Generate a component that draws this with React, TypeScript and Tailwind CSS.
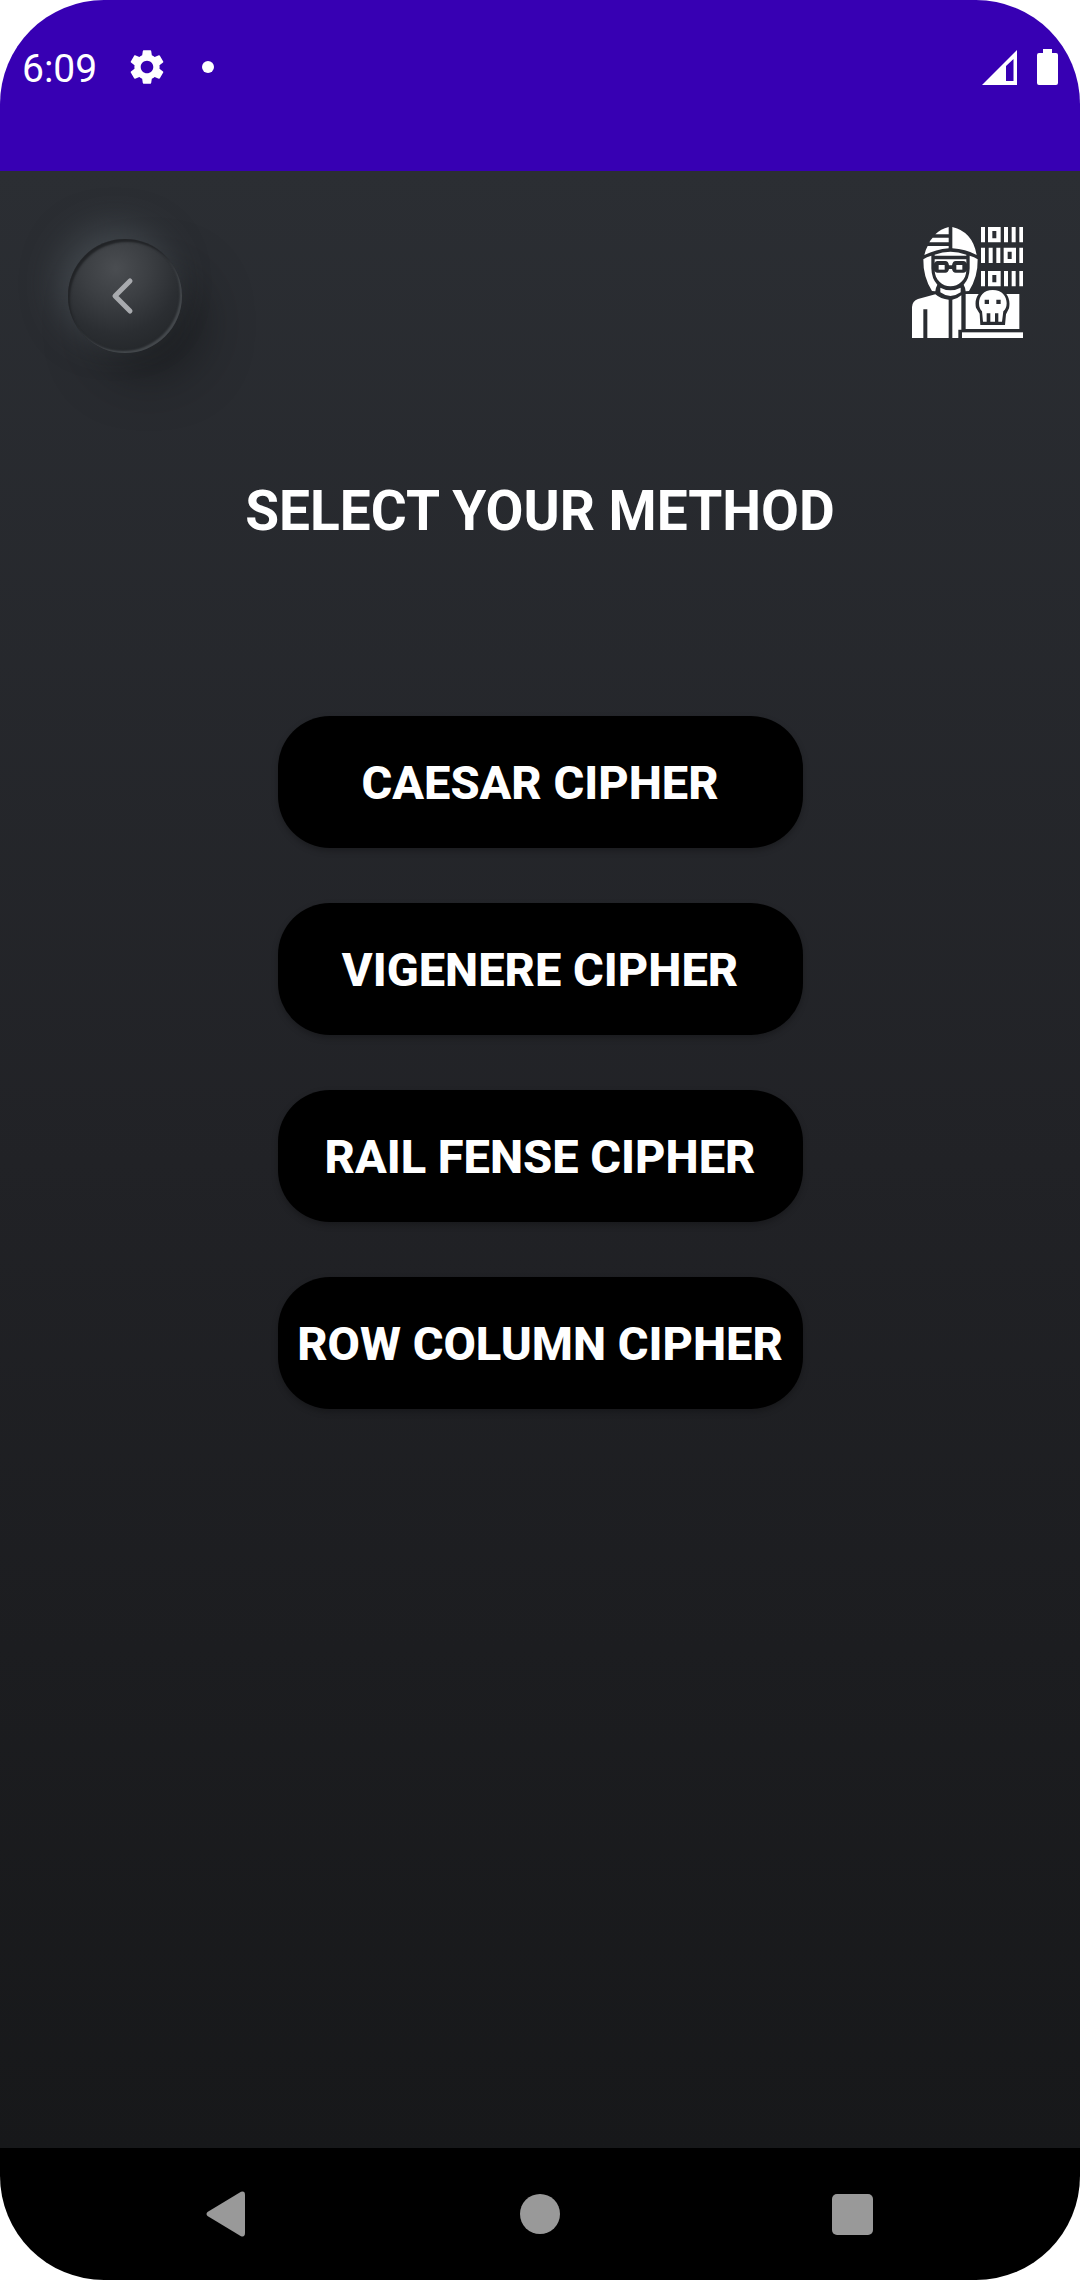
import React from "react";
import { MdSettings } from "react-icons/md";

const METHODS = [
  "CAESAR CIPHER",
  "VIGENERE CIPHER",
  "RAIL FENSE CIPHER",
  "ROW COLUMN CIPHER",
];

function StatusBar() {
  return (
    <div className="flex h-[171px] items-start justify-between bg-[#3700b3] pt-[46px] pr-[22px] pl-[22px] text-white">
      <div className="flex h-[42px] items-center">
        <span className="pt-1 text-[39px] leading-[42px]">6:09</span>
        <MdSettings className="ml-[29px] size-[42px]" aria-label="Settings" />
        <span className="ml-[34px] size-3 rounded-full bg-white" />
      </div>
      <div className="flex h-[42px] items-center gap-5">
        <svg viewBox="0 0 35 35" className="size-[35px]" aria-label="Signal">
          <path
            fill="currentColor"
            fillRule="evenodd"
            d="M0 35 35 0V35ZM24 16V31H31.500V9Z"
          />
        </svg>
        <svg viewBox="0 0 21 36" className="h-9 w-[21px]" aria-label="Battery">
          <path
            fill="currentColor"
            d="M6 0H15V4H19Q21 4 21 6V34Q21 36 19 36H2Q0 36 0 34V6Q0 4 2 4H6Z"
          />
        </svg>
      </div>
    </div>
  );
}

function BackButton() {
  return (
    <button
      type="button"
      aria-label="Back"
      className="mt-3 flex size-[114px] items-center justify-center rounded-full bg-[radial-gradient(circle_at_42%_26%,#4a4d51_0%,#3c3f43_30%,#2b2e32_60%,#232629_85%)] shadow-[-10px_-12px_34px_rgba(88,95,102,0.5),24px_28px_44px_rgba(20,22,24,0.5),inset_2px_3px_2px_#222427,inset_-2px_-2px_2px_#45494d]"
    >
      <svg viewBox="0 0 114 114" className="size-[114px]" fill="none">
        <path
          d="M62 42 47 57 62 72"
          stroke="#a8aaae"
          strokeWidth="5"
          strokeLinecap="round"
          strokeLinejoin="round"
        />
      </svg>
    </button>
  );
}

function HackerLogo() {
  return (
    <svg
      viewBox="36 36 333 333"
      className="size-[111px] text-white"
      role="img"
      aria-label="Hacker"
    >
      <g fill="currentColor">
        {/* cap */}
        <path d="M146 36V58H106Q122 42 146 36Z" />
        <path d="M98 68H146V82H88Q92 74 98 68Z" />
        <path d="M83 93H146V100Q108 103 73 120Q76 105 83 93Z" />
        <path d="M157 36Q218 50 230 120Q196 102 157 100Z" />
        {/* hood sides */}
        <path d="M70 133Q80 126 94 122V160Q95 192 112 209Q106 220 106 229L96 228Q69 186 70 133Z" />
        <path d="M233 133Q223 126 209 122V160Q208 192 191 209Q197 220 197 229L207 228Q234 186 233 133Z" />
        {/* face */}
        <path d="M104 119Q151 102 199 119V122H104Z" />
        <path
          fillRule="evenodd"
          d="M104 133H199V165C199 194 176 214 151 214C127 214 104 194 104 165ZM112 138Q104 138 104 147V164Q104 173 112 173H136Q145 173 147 162H156Q158 173 167 173H190Q199 173 199 164V147Q199 138 190 138H167Q158 138 156 151H147Q145 138 136 138Z"
        />
        <rect x="116" y="150" width="18" height="14" />
        <rect x="169" y="150" width="18" height="14" />
        {/* neck and torso */}
        <path d="M121 218Q151 234 182 218V232Q151 254 121 232Z" />
        <path d="M36 369V276Q37 258 54 252L106 238Q122 252 146 254V369H82V283H70V369Z" />
        <path d="M157 254Q172 252 184 241V344H175V369H157Z" />
        {/* laptop */}
        <path d="M197 237H236Q223 254 228 278L239 296L241 330H315L318 298L327 280Q332 254 319 237H358V342H197Z" />
        <rect x="186" y="352" width="183" height="17" />
        {/* skull */}
        <path
          fillRule="evenodd"
          d="M278 225C306 225 320 244 320 265Q320 280 310 289L306 320H295V295H285V320H271V295H260V320H249L246 289Q237 280 237 265C237 244 251 225 278 225ZM254 254V267H267V254ZM289 254V267H302V254Z"
        />
        {/* binary digits, row 1 */}
        <path
          fillRule="evenodd"
          d="M243 36H255V82H243ZM264 36H302V82H264ZM277 48V70H289V48ZM312 36H324V82H312ZM335 36H347V82H335ZM358 36H369V82H358Z"
        />
        {/* row 2 */}
        <path
          fillRule="evenodd"
          d="M243 98H255V144H243ZM266 98H278V144H266ZM289 98H301V144H289ZM311 98H348V144H311ZM323 110V132H335V110ZM358 98H369V144H358Z"
        />
        {/* row 3 */}
        <path
          fillRule="evenodd"
          d="M243 168H255V214H243ZM264 168H302V214H264ZM277 180V202H289V180ZM312 168H324V214H312ZM335 168H347V214H335ZM358 168H369V214H358Z"
        />
      </g>
    </svg>
  );
}

function NavigationBar() {
  return (
    <nav className="grid h-[132px] grid-cols-3 items-center justify-items-center bg-black px-[72px] text-[#999999]">
      <button type="button" aria-label="Back" className="pr-1">
        <svg viewBox="0 0 40 46" className="h-[46px] w-10">
          <path
            fill="currentColor"
            d="M1.500 21 35 .800Q39 -.500 39 4V42Q39 46.500 35 45.200L1.500 25Q-.500 23 1.500 21Z"
          />
        </svg>
      </button>
      <button
        type="button"
        aria-label="Home"
        className="size-10 rounded-full bg-[#999999]"
      />
      <button
        type="button"
        aria-label="Overview"
        className="size-[41px] rounded-[5px] bg-[#999999]"
      />
    </nav>
  );
}

export default function App() {
  return (
    <div className="min-h-screen bg-white font-['Roboto',sans-serif]">
      <div className="flex min-h-screen flex-col overflow-hidden rounded-[104px]">
        <StatusBar />
        <main className="flex flex-1 flex-col items-center bg-linear-to-b from-[#2b2e33] via-[#212226] to-[#17181a] pt-14">
          <header className="flex w-full items-start justify-between pr-[57px] pl-[68px]">
            <BackButton />
            <HackerLogo />
          </header>
          <h1 className="mt-[126px] text-[55px] leading-[64px] font-bold text-white">
            SELECT YOUR METHOD
          </h1>
          <div className="mt-[173px] flex w-[525px] flex-col gap-[55px]">
            {METHODS.map((name) => (
              <button
                key={name}
                type="button"
                className="h-[132px] rounded-[52px] bg-black pt-[3px] text-[47px] font-extrabold whitespace-nowrap text-white shadow-[0_3px_6px_rgba(0,0,0,0.25)]"
              >
                {name}
              </button>
            ))}
          </div>
        </main>
        <NavigationBar />
      </div>
    </div>
  );
}
